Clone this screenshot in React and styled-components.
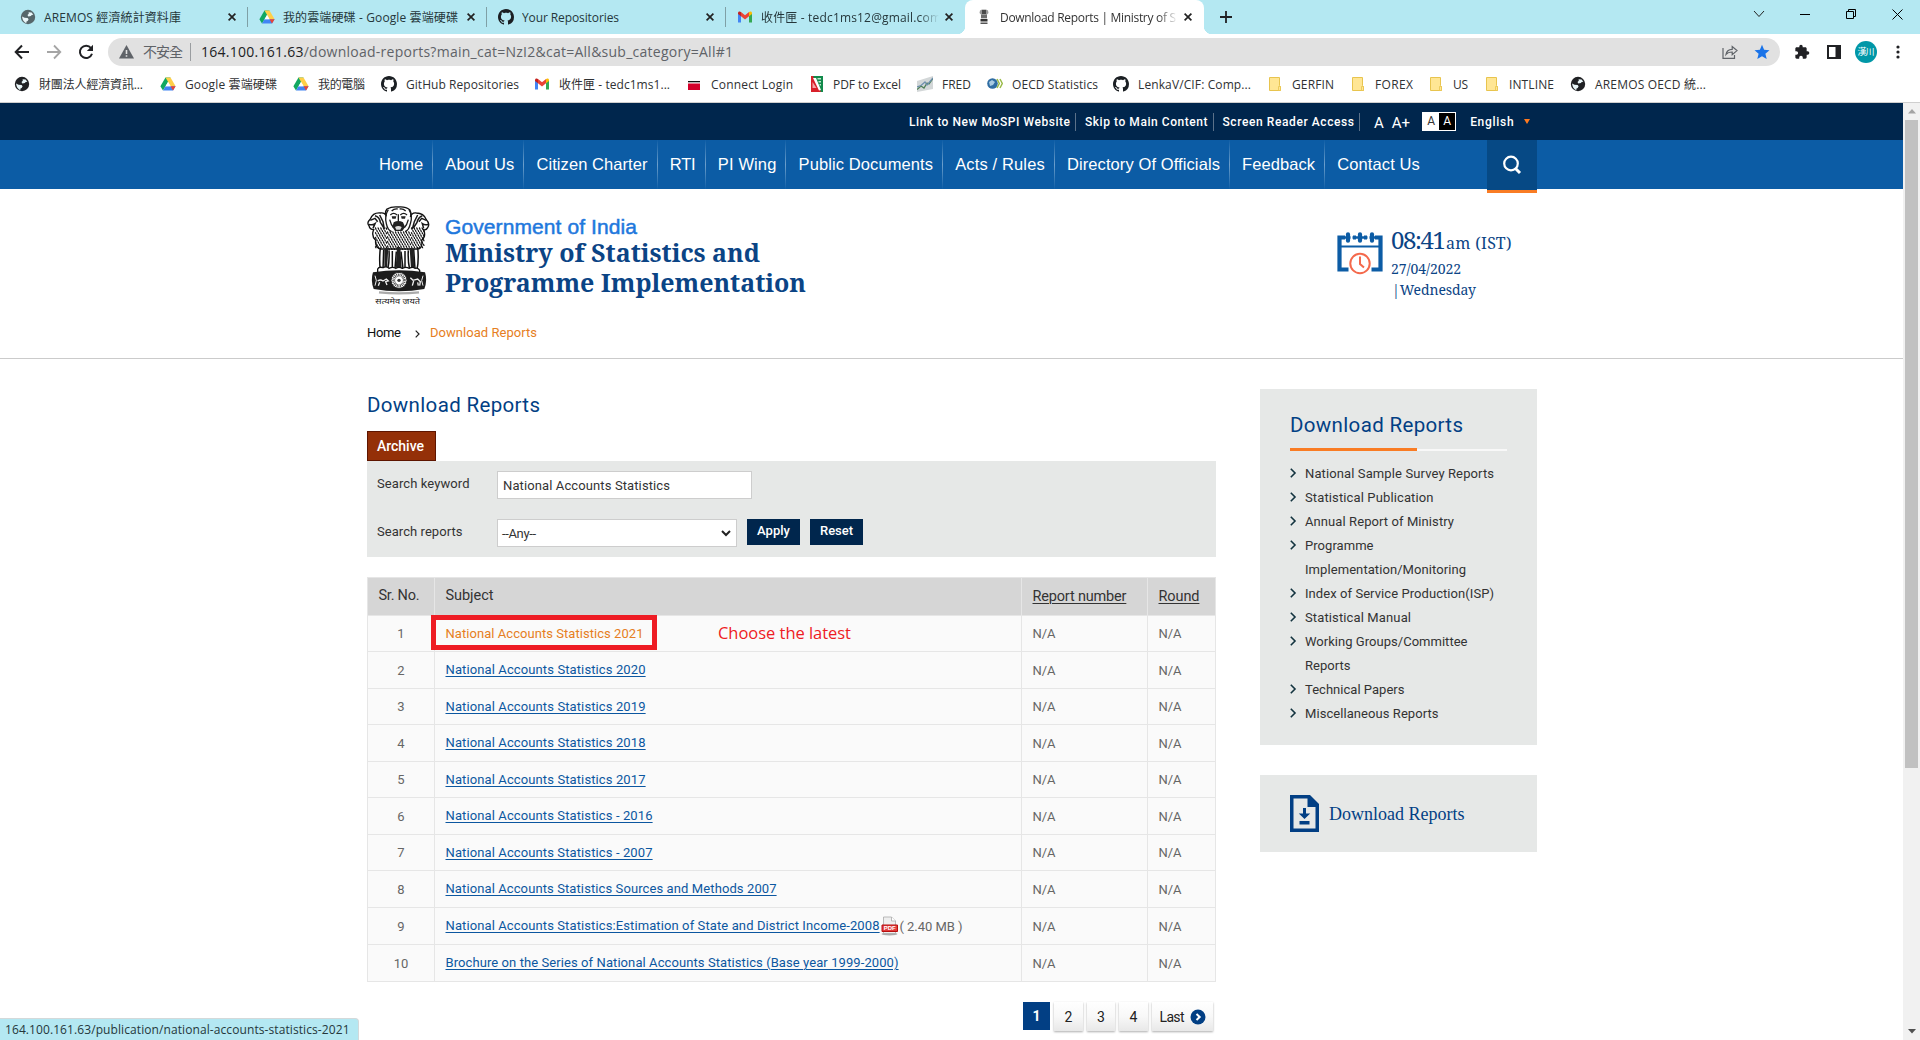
import React, { useLayoutEffect, useRef, useState } from "react";
import styled, { createGlobalStyle, css } from "styled-components";

const ui = `"Open Sans", "Noto Sans", "Noto Sans CJK TC", sans-serif`;
const roboto = `Roboto, "Liberation Sans", sans-serif`;
const arial = `"Liberation Sans", Arial, sans-serif`;
const slab = `"Noto Serif", "Droid Serif", "DejaVu Serif Condensed", "DejaVu Serif", serif`;

const Global = createGlobalStyle`
  * { box-sizing: border-box; }
  html, body { margin: 0; padding: 0; background: #fff; overflow: hidden; }
  body { font-family: ${roboto}; }
  a { color: inherit; }
`;

/* ---------- text set to a measure ---------- */

const Track = styled.span`
  display: inline-block;
  flex: none;
  white-space: pre;
`;

/* Tracks a label in or out so that it fills the measure `to`. */
function Fit({ to, children }) {
  const ref = useRef(null);
  const [ls, setLs] = useState(0);
  useLayoutEffect(() => {
    const el = ref.current;
    el.style.letterSpacing = "0px";
    el.style.marginRight = "0px";
    const natural = el.getBoundingClientRect().width;
    const n = Array.from(el.textContent).length;
    const v = n > 1 ? (to - natural) / (n - 1) : 0;
    el.style.letterSpacing = `${v}px`;
    el.style.marginRight = `${-v}px`;
    setLs(v);
  }, [to, children]);
  return (
    <Track ref={ref} style={{ letterSpacing: `${ls}px`, marginRight: `${-ls}px` }}>
      {children}
    </Track>
  );
}

/* ---------- browser chrome ---------- */

const Screen = styled.div`
  width: 1920px;
  height: 1040px;
  display: flex;
  flex-direction: column;
  position: relative;
  overflow: hidden;
  background: #fff;
`;

const TabStrip = styled.div`
  height: 34px;
  flex: none;
  display: flex;
  background: #b4e8f2;
  padding-left: 8px;
  font: 12px/35px ${ui};
  color: #25373b;
`;

const Tab = styled.div`
  width: 239px;
  height: 34px;
  flex: none;
  display: flex;
  align-items: center;
  padding: 0 7px 0 12px;
  position: relative;
  ${(p) =>
    p.$active
      ? css`
          background: #fff;
          border-radius: 8px 8px 0 0;
          margin: 0 1px;
          padding: 0 8px 0 11px;
          color: #333;
          &::before,
          &::after {
            content: "";
            position: absolute;
            bottom: 0;
            width: 8px;
            height: 8px;
          }
          &::before {
            left: -8px;
            background: radial-gradient(circle at 0 0, transparent 8px, #fff 8.5px);
          }
          &::after {
            right: -8px;
            background: radial-gradient(circle at 100% 0, transparent 8px, #fff 8.5px);
          }
        `
      : !p.$last &&
        css`
          &::after {
            content: "";
            position: absolute;
            right: -1px;
            top: 7px;
            width: 1px;
            height: 20px;
            background: #7fa0a6;
          }
        `}
`;

const TabTitle = styled.div`
  flex: 1;
  height: 34px;
  margin-left: 8px;
  overflow: hidden;
  white-space: nowrap;
  ${(p) => p.$fade && css`
    mask-image: linear-gradient(90deg, #000 158px, transparent 178px);
  `}
`;

const CloseBox = styled.div`
  width: 16px;
  height: 16px;
  display: grid;
  place-items: center;
`;

const NewTab = styled.div`
  width: 28px;
  margin-left: 7px;
  display: grid;
  place-items: center;
`;

const WindowButtons = styled.div`
  margin-left: auto;
  height: 28px;
  display: flex;
`;

const WindowButton = styled.div`
  width: 46px;
  height: 28px;
  display: grid;
  place-items: center;
`;

const Toolbar = styled.div`
  height: 36px;
  flex: none;
  display: flex;
  align-items: center;
  padding-left: 6px;
`;

const ToolButton = styled.div`
  width: 32px;
  height: 28px;
  flex: none;
  display: grid;
  place-items: center;
`;

const Omnibox = styled.div`
  width: 1672px;
  height: 28px;
  flex: none;
  margin: 0 6px 0 6px;
  border-radius: 14px;
  background: #e1e1e1;
  display: flex;
  align-items: center;
  padding: 0 10px 0 11px;
  font: 14px/28px ${ui};
  color: #5f6368;
`;

const Insecure = styled.div`
  margin-left: 9px;
  padding-right: 7px;
  display: flex;
  line-height: 18px;
  border-right: 1px solid #9a9da0;
  margin-right: 10px;
`;

const Host = styled.span`
  color: #202124;
`;

const OmniActions = styled.div`
  margin-left: auto;
  display: flex;
  gap: 16px;
  align-items: center;
`;

const Bookmarks = styled.div`
  height: 33px;
  flex: none;
  display: flex;
  align-items: center;
  padding-left: 14px;
  padding-bottom: 4px;
  border-bottom: 1px solid #cfcfcf;
  font: 12px/26px ${ui};
  color: #2f3133;
`;

const Bookmark = styled.div`
  width: ${(p) => p.$w}px;
  flex: none;
  display: flex;
  align-items: center;
  gap: 9px;
  white-space: nowrap;
  & > span { padding-top: 1px; }
`;

const Avatar = styled.div`
  width: 22px;
  height: 22px;
  border-radius: 50%;
  background: #0097a7;
  color: #fff;
  font: 9px/22px ${ui};
  text-align: center;
  white-space: nowrap;
`;

const StatusBubble = styled.div`
  position: absolute;
  left: 0;
  bottom: 0;
  width: 359px;
  height: 22px;
  border: 1px solid #d3d9da;
  border-left: 0;
  border-bottom: 0;
  border-radius: 0 4px 0 0;
  background: #b4e8f2;
  padding-left: 5px;
  font: 12px/21px ${ui};
  color: #25373b;
`;

/* ---------- viewport ---------- */

const Viewport = styled.div`
  flex: 1;
  min-height: 0;
  display: flex;
`;

const Page = styled.div`
  width: 1903px;
  flex: none;
  overflow: hidden;
`;

const Scrollbar = styled.div`
  width: 17px;
  background: #f1f1f1;
  display: flex;
  flex-direction: column;
  align-items: center;
`;

const ArrowCell = styled.div`
  height: 17px;
  display: grid;
  place-items: center;
`;

const Thumb = styled.div`
  width: 13px;
  height: 648px;
  background: #c1c1c1;
  margin-bottom: auto;
`;

const TopBar = styled.div`
  height: 37px;
  background: #00264d;
`;

const Container = styled.div`
  width: 1170px;
  margin-left: 367px;
  display: flex;
`;

const TopLinks = styled(Container)`
  height: 37px;
  padding-left: 542px;
  align-items: center;
  color: #fff;
  font: 500 12px/18px ${roboto};
`;

const TopLink = styled.div`
  height: 18px;
  border-right: 1px solid #5b7189;
  padding-right: 5px;
  margin-right: 9px;
`;

const TextSize = styled.div`
  display: flex;
  gap: 8px;
  margin: 2px 0 0 5px;
  font: 400 15px/18px ${roboto};
`;

const Contrast = styled.div`
  width: 34px;
  height: 19px;
  margin-left: 12px;
  border: 1px solid #fff;
  display: grid;
  grid-template-columns: 1fr 1fr;
  font: 12px/17px ${roboto};
  text-align: center;
  span:first-child { background: #fff; color: #333; }
  span:last-child { background: #000; color: #fff; }
`;

const Language = styled.div`
  display: flex;
  align-items: center;
  gap: 10px;
  margin-left: 14px;
`;

const Caret = styled.div`
  border: 3.5px solid transparent;
  border-top: 5px solid #ff7a1f;
  border-bottom: 0;
`;

const NavBar = styled.div`
  height: 49px;
  background: #0c5ca5;
`;

const NavItem = styled.div`
  height: 49px;
  flex: none;
  padding: 0 9.1px 0 12.1px;
  color: #fff;
  font: 16.5px/49px ${arial};
  border-right: 1px solid;
  border-image: ${(p) =>
    p.$last ? "linear-gradient(#0c5ca5, #0c5ca5) 1" : "linear-gradient(#0c5ca5, #6c9fcc 50%, #0c5ca5) 1"};
`;

const NavSearch = styled.div`
  width: 50px;
  height: 53px;
  margin-left: auto;
  background: #064985;
  border-bottom: 3px solid #f97c24;
  display: grid;
  place-items: center;
  position: relative;
`;

const Masthead = styled.header`
  height: 170px;
  border-bottom: 1px solid #cbcbcb;
  display: flex;
  flex-direction: column;
`;

const Brand = styled(Container)`
  height: 130px;
`;

const BrandText = styled.div`
  margin-left: 10px;
  padding-top: 24px;
  width: 500px;
`;

const Govt = styled.div`
  height: 24px;
  font: 21px/27px ${arial};
  -webkit-text-stroke: 0.5px #1f78dd;
  color: #1f78dd;
`;

const Ministry = styled.div`
  font: bold 25px/30px ${slab};
  color: #0b4485;
`;

const Clock = styled.div`
  margin-left: 392px;
  padding-top: 43px;
  display: flex;
  gap: 8px;
  color: #0b4485;
`;

const ClockText = styled.div`
  font: 14px/21px ${slab};
  margin-top: -6px;
`;

const ClockLine = styled.div`
  display: flex;
  align-items: baseline;
  padding-left: ${(p) => p.$indent ?? 0}px;
`;

const TimeLine = styled(ClockLine)`
  height: 32px;
`;

const Hour = styled.span`
  font-size: 24px;
  line-height: 27px;
`;

const Zone = styled.span`
  font-size: 16px;
`;

const Crumbs = styled(Container)`
  font: 13px/28px ${roboto};
  color: #111;
  align-items: center;
`;

const CrumbSep = styled.span`
  width: 29px;
  padding: 2px 0 0 3px;
  display: grid;
  place-items: center;
`;

const Orange = styled.span`
  color: #e67e22;
`;

const Body = styled(Container)`
  padding-top: 30px;
  justify-content: space-between;
  align-items: flex-start;
`;

const Main = styled.main`
  width: 849px;
`;

const Heading = styled.h1`
  margin: 0;
  font: 400 20.5px/32px ${roboto};
  color: #023f84;
`;

const Archive = styled.button`
  display: flex;
  align-items: center;
  width: 69px;
  height: 30px;
  margin-top: 10px;
  padding: 0 0 0 9px;
  border: 1px solid #5e1500;
  background: #943008;
  color: #fff;
  font: 500 14px/28px ${roboto};
`;

const Filters = styled.div`
  height: 96px;
  background: #e6e8e7;
  padding: 10px 10px 0;
  display: grid;
  grid-template-rows: 28px 28px;
  row-gap: 20px;
  font: 13px/26px ${roboto};
  color: #333;
`;

const FilterRow = styled.div`
  display: flex;
`;

const FieldLabel = styled.div`
  width: 120px;
`;

const Field = styled.div`
  width: ${(p) => p.$w}px;
  height: 28px;
  border: 1px solid #cdcdcd;
  background: #fff;
  padding: 1px 5px 0 ${(p) => p.$pad}px;
  line-height: 25px;
  display: flex;
  justify-content: space-between;
  align-items: center;
`;

const Submit = styled.button`
  width: 53px;
  height: 26px;
  margin-left: 10px;
  padding: 0;
  border: 0;
  background: #00264d;
  color: #fff;
  font: 500 13px/24px ${roboto};
  display: flex;
  justify-content: center;
`;

const Table = styled.div`
  margin-top: 20px;
  border: 1px solid #e6e6e6;
  border-bottom: 0;
`;

const Row = styled.div`
  height: ${(p) => p.$h}px;
  display: grid;
  grid-template-columns: 67px 587px 126px 67px;
  border-bottom: 1px solid #e6e6e6;
  background: ${(p) => (p.$head ? "#d6d6d6" : "#fafafa")};
  font: ${(p) => (p.$head ? 14.5 : 13)}px/1 ${roboto};
  color: ${(p) => (p.$head ? "#333" : "#666")};
`;

const Cell = styled.div`
  border-right: ${(p) => (p.$last ? 0 : 1)}px solid #e6e6e6;
  padding-left: ${(p) => (p.$center ? 0 : 10.5)}px;
  display: flex;
  align-items: center;
  justify-content: ${(p) => (p.$center ? "center" : "flex-start")};
  position: relative;
`;

const Link = styled.a`
  color: #0c57a0;
  line-height: 20px;
  & > span {
    text-decoration: underline;
    text-decoration-thickness: 1px;
    text-underline-offset: 2px;
  }
`;

const HeadLink = styled(Link)`
  color: #333;
`;

const HotLink = styled.a`
  color: #e67e22;
  line-height: 20px;
`;

const FileSize = styled.span`
  display: flex;
  align-items: center;
  gap: 2px;
  margin-left: 1px;
`;

const Marker = styled.div`
  position: absolute;
  left: -4px;
  top: -1px;
  width: 226px;
  height: 35px;
  border: 5px solid #ee1c24;
`;

const Note = styled.div`
  position: absolute;
  left: 283px;
  top: 5px;
  font: 16.5px/24px ${ui};
  color: #ee1c24;
`;

const Pager = styled.div`
  margin-top: 20px;
  display: flex;
  justify-content: flex-end;
  gap: 4.2px;
  padding-right: 2.7px;
  font: 14px/28px ${roboto};
  color: #222;
`;

const PageBox = styled.div`
  width: ${(p) => p.$w ?? 28.3}px;
  height: 29px;
  display: flex;
  align-items: center;
  justify-content: center;
  gap: 5px;
  ${(p) =>
    p.$current
      ? css`
          background: #023f84;
          color: #fff;
          font-weight: 700;
          height: 28px;
        `
      : css`
          background: linear-gradient(#fff, #f8f8f8 50%, #e8e8e8);
          box-shadow: 0 1px 2px rgba(0, 0, 0, 0.32);
        `}
`;

const Aside = styled.aside`
  width: 277px;
  display: flex;
  flex-direction: column;
  gap: 30px;
`;

const Panel = styled.section`
  height: 356px;
  background: #e6e8e7;
  padding: 20px 30px 0;
`;

const Rule = styled.div`
  width: 217px;
  height: 3px;
  margin-top: 7px;
  background: linear-gradient(90deg, #f97c24 127px, transparent 127px),
    linear-gradient(transparent 1px, #f8f8f8 1px);
`;

const Items = styled.ul`
  list-style: none;
  margin: 11px 0 0;
  padding: 0;
  font: 13px/24px ${roboto};
  color: #333;
`;

const Item = styled.li`
  display: grid;
  grid-template-columns: 15px 1fr;
  svg { margin-top: 6px; }
`;

const DownloadCard = styled.section`
  height: 77px;
  background: #e6e8e7;
  padding: 0 30px;
  display: flex;
  align-items: center;
  gap: 10px;
  font: 18px/24px "Liberation Serif", serif;
  color: #023f84;
`;

/* ---------- icons ---------- */

const Globe = ({ c = "#202124" }) => (
  <svg width="16" height="16" viewBox="0 0 16 16">
    <circle cx="8" cy="8" r="7.2" fill={c} />
    <path d="M8.6 3.2l3 .3 1.7 2.3-1.6.1-.8 1.2-2.6.3-.8-1.5 1.3-1.1zM2 7.6l2.6 1.1 3 .3 1 1.3-.9 1.6-1.2.7-.2 1.6-1.6-.9-1.5-1.7-.6-1.6z" fill="#e9f6f9" />
  </svg>
);

const Drive = () => (
  <svg width="16" height="16" viewBox="0 0 16 16">
    <path d="M5.5 1.5h5L8 6 3 14.5.4 10.2z" fill="#11a861" />
    <path d="M5.5 1.5h5l5.1 8.7h-5z" fill="#ffcf48" />
    <path d="M3 14.5l2.600-4.300h10L13 14.500z" fill="#4285f4" />
    <path d="M8 5.900l2.600 4.300h-5z" fill="#fff" />
    <path d="M13 14.500l-2.400-4.300h5z" fill="#ea4335" />
  </svg>
);

const Github = () => (
  <svg width="16" height="16" viewBox="0 0 16 16">
    <path
      fill="#1b1f23"
      d="M8 0C3.58 0 0 3.58 0 8c0 3.54 2.29 6.53 5.47 7.59.4.07.55-.17.55-.38 0-.19-.01-.82-.01-1.49-2.01.37-2.53-.49-2.69-.94-.09-.23-.48-.94-.82-1.13-.28-.15-.68-.52-.01-.53.63-.01 1.08.58 1.23.82.72 1.21 1.87.87 2.33.66.07-.52.28-.87.51-1.07-1.78-.2-3.64-.89-3.64-3.95 0-.87.31-1.59.82-2.15-.08-.2-.36-1.02.08-2.12 0 0 .67-.21 2.2.82.64-.18 1.32-.27 2-.27s1.36.09 2 .27c1.53-1.04 2.2-.82 2.2-.82.44 1.1.16 1.92.08 2.12.51.56.82 1.27.82 2.15 0 3.07-1.87 3.75-3.65 3.95.29.25.54.73.54 1.48 0 1.07-.01 1.93-.01 2.2 0 .21.15.46.55.38A8.01 8.01 0 0016 8c0-4.42-3.58-8-8-8z"
    />
  </svg>
);

const Gmail = () => (
  <svg width="16" height="16" viewBox="0 0 16 16">
    <path d="M1 13.6V4l3 2.2v7.4z" fill="#4285f4" />
    <path d="M12 13.6V6.2L15 4v9.6z" fill="#34a853" />
    <path d="M4 3l4 3.2L12 3v4.2L8 10.4 4 7.2z" fill="#ea4335" />
    <path d="M1 4.2C1 2.3 2.8 2 4 3v4.2L1 5z" fill="#c5221f" />
    <path d="M15 4.2C15 2.3 13.2 2 12 3v4.2L15 5z" fill="#fbbc04" />
  </svg>
);

const RedFlag = () => (
  <svg width="16" height="16" viewBox="0 0 16 16">
    <path d="M2 5h12v1.300H2z" fill="#111" />
    <path d="M2 7.500h12V14H2z" fill="#d4002a" />
  </svg>
);

const PdfExcel = () => (
  <svg width="16" height="16" viewBox="0 0 16 16">
    <path d="M3 0h12v16H3z" fill="#128a4b" />
    <path d="M3 0h2l8 16H3z" fill="#d8202a" />
    <path d="M5 2h3l5 12-2 .500z" fill="#fff" />
    <path d="M9.500 2h3.500v1.500H9.500zM10.500 5H13v1.500h-2.500zM11.500 8H13v1.500h-1.500z" fill="#bfe6cd" />
    <path d="M4.500 6l4 6h-4z" fill="#f3a6a6" />
  </svg>
);

const Fred = () => (
  <svg width="16" height="16" viewBox="0 0 16 16">
    <path d="M0 5l16-5v13L0 16z" fill="#d3d7d8" />
    <path d="M0 13.500l4-3.500 3 2 3-5 2 1 4-5.500" fill="none" stroke="#4d7f55" strokeWidth="1.300" />
    <path d="M0 11l4-1.500L8 6l2 3 6-7" fill="none" stroke="#6e8fae" strokeWidth="1.200" />
  </svg>
);

const Oecd = () => (
  <svg width="16" height="16" viewBox="0 0 16 16">
    <circle cx="5.500" cy="7.500" r="5.300" fill="#2f6da3" />
    <path d="M2 6l3-2 3 2-2 3-3 1z" fill="#a9cbe2" />
    <path d="M10 3l2.300 4.500L10 12M13 3l2.300 4.500L13 12" fill="none" stroke="#9bbb4a" strokeWidth="1.500" />
  </svg>
);

const Folder = () => (
  <svg width="16" height="16" viewBox="0 0 16 16">
    <path d="M2.500 1.500h10v8l1 1v4h-11z" fill="#ffe694" stroke="#e8c44e" />
    <path d="M11.500 14.500v-4h2v4z" fill="#ffe694" stroke="#e8c44e" strokeWidth=".8" />
  </svg>
);

const Close = () => (
  <svg width="8" height="8" viewBox="0 0 8 8">
    <path d="M.6.6l6.800 6.800M7.400.6L.6 7.400" stroke="#222" strokeWidth="1.700" />
  </svg>
);

const Chevron = ({ c = "#12333f", s = 1.6 }) => (
  <svg width="7" height="10" viewBox="0 0 7 10">
    <path d="M.8.8L5 5 .8 9.200" fill="none" stroke={c} strokeWidth={s} />
  </svg>
);

const Calendar = () => (
  <svg width="46" height="43" viewBox="0 0 46 43">
    <path
      d="M8 5.500H2.500v32h9M38 5.500h5.500v32h-9M16 5.500h3M27 5.500h3"
      fill="none"
      stroke="#0c5ca5"
      strokeWidth="4.200"
    />
    <path d="M3 14.500h40" stroke="#0c5ca5" strokeWidth="2.200" />
    <path d="M11 2.300v6.400M23 2.300v6.400M35 2.300v6.400" stroke="#0c5ca5" strokeWidth="4.200" strokeLinecap="round" />
    <path d="M8 5.500h30" stroke="#0c5ca5" strokeWidth="2.400" strokeDasharray="5.500 2 7 2 6 2 6" />
    <circle cx="23" cy="31.500" r="9.700" fill="#fff" stroke="#f4694c" strokeWidth="2" />
    <path d="M23 24.500V32l4 3.500" fill="none" stroke="#f4694c" strokeWidth="2" />
  </svg>
);

const DownloadDoc = () => (
  <svg width="29" height="37" viewBox="0 0 29 37">
    <path d="M0 0h20l9 9v28H0z" fill="#023f84" />
    <path d="M3.500 3.500h14V12h8v21.500h-22z" fill="#e6e8e7" />
    <path d="M13 13h3v5.500h4.200l-5.700 5.600-5.700-5.600H13zM9.500 26h10v3.500h-10z" fill="#023f84" />
  </svg>
);

const PdfIcon = () => (
  <svg width="17" height="20" viewBox="0 0 17 20">
    <ellipse cx="8.500" cy="18" rx="8" ry="1.400" fill="#aaa" />
    <path d="M2.500 1h8l4 4v12.500h-12z" fill="#eee" stroke="#aaa" strokeWidth=".8" />
    <path d="M10.500 1v4h4" fill="#fff" stroke="#aaa" strokeWidth=".8" />
    <path d="M1 9h15.500v6.500H1z" fill="#e23b3b" stroke="#b80f0f" />
    <text x="8.700" y="14.400" fontFamily="Liberation Sans" fontWeight="bold" fontSize="6" textAnchor="middle" fill="#fff">PDF</text>
  </svg>
);

const EmblemSvg = styled.svg`
  margin: 17px 0 0 -1px;
  flex: none;
`;

/* Mane locks, drawn as staggered short curls. */
const locks = (x0, x1, y0, y1) => {
  let d = "";
  let odd = 0;
  for (let y = y0; y < y1; y += 7) {
    for (let x = x0 + (odd % 2) * 4; x < x1; x += 8) d += `M${x} ${y}q3 1 3 6`;
    odd += 1;
  }
  return d;
};

const Emblem = () => (
  <EmblemSvg width="69" height="104" viewBox="21 15 207 312">
    <path d="M60 92q-8 60 2 118h112q12-60 4-118z" fill="#fff" />
    <path
      d="M84 24q14-8 34-6 22-2 34 8 6 12 2 22 4-14 18-12 22 0 30 20 12 12 4 24-4 8-12 6 8 20-6 32 4 26-14 26H66q-18-2-16-26-14-14-6-32-12 0-14-12-8-8 4-20 8-20 30-18 14-2 18 10-6-12 2-22z"
      fill="#fff"
      stroke="#111"
      strokeWidth="4"
    />
    <path d={locks(48, 84, 80, 142)} stroke="#111" strokeWidth="3.800" fill="none" />
    <path d={locks(84, 156, 92, 146)} stroke="#111" strokeWidth="3.800" fill="none" />
    <path d={locks(156, 194, 80, 142)} stroke="#111" strokeWidth="3.800" fill="none" />
    <path
      d="M88 26q-12 18-6 42 4 20 16 24M150 26q12 18 4 42-4 20-16 24M94 42q10-10 20 0M124 42q10-10 20 0M118 40v22M98 30q8-8 18-6M140 30q-8-8-18-6M92 56q4 16 12 24M148 56q-4 16-12 24"
      stroke="#1a1a1a"
      strokeWidth="4"
      fill="none"
    />
    <path d="M98 46h14l-2 7h-10zM126 46h14l-2 7h-10z" fill="#222" />
    <path d="M104 64q14-8 28 0l6 14-8 12H108l-8-12z" fill="#222" />
    <path d="M108 78q10-6 20 0l-4 8h-12z" fill="#ddd" />
    <path
      d="M30 70q10 4 18-2l-6 14M34 58l14-6 8 10M48 44q14 4 16 20l10 16M62 42l10 20 4 22M208 70q-10 4-18-2l4 14M202 58l-14-6-8 10M190 44q-12 4-16 20l-10 16M176 42l-10 20-6 22"
      stroke="#1a1a1a"
      strokeWidth="4.500"
      fill="none"
    />
    <path
      d="M64 140q-4 40 0 66M74 146l-2 60M90 148q2 30-4 58M100 150v54M112 152l-4 50M126 152l6 50M138 150v54M148 148q-2 30 4 58M164 144l4 60M176 138q4 40-2 68"
      stroke="#111"
      strokeWidth="4.500"
      fill="none"
    />
    <path d="M76 142h12l-4 62h-8zM114 138h10l4 62h-18zM152 142h12l2 62h-10z" fill="#222" />
    <path d="M56 204q4-8 16-4 10-6 18 2 12-6 20 0 10-6 20 0 12-6 20 0 12-6 18 0 10-2 14 6v8H56z" fill="#fff" stroke="#111" strokeWidth="4" />
    <path d="M42 214q78-12 156 0 8 24-2 50-76 14-152 0-10-26-2-50z" fill="#1c1c1c" />
    <path d="M48 224q8 14 0 30M192 224q-8 14 0 30" stroke="#eee" strokeWidth="3" fill="none" />
    <circle cx="120" cy="238" r="24" fill="#fff" stroke="#222" strokeWidth="3" />
    <circle cx="120" cy="238" r="16" fill="none" stroke="#444" strokeWidth="9" strokeDasharray="2.500 2.200" />
    <circle cx="120" cy="238" r="5" fill="#333" />
    <path d="M56 240q8-6 16 0l10-6 6 6-8 2 4 10M62 244l-4 10M154 230l8 8 14-4 8 8-2 12M164 240l-4 14M176 244l2 10" stroke="#eee" strokeWidth="4" fill="none" />
    <path d="M60 274q60 6 120 0" stroke="#aaa" strokeWidth="7" fill="none" />
    <text
      x="116"
      y="308"
      textAnchor="middle"
      textLength="134"
      lengthAdjust="spacingAndGlyphs"
      fontSize="25"
      fontFamily="Noto Sans Devanagari, Lohit Devanagari, Noto Sans, sans-serif"
      fill="#222"
    >
      सत्यमेव जयते
    </text>
  </EmblemSvg>
);

/* ---------- data ---------- */

const tabs = [
  { icon: <Globe c="#56666a" />, text: "AREMOS 經濟統計資料庫", w: 137 },
  { icon: <Drive />, text: "我的雲端硬碟 - Google 雲端硬碟", w: 175 },
  { icon: <Github />, text: "Your Repositories", w: 97 },
  { icon: <Gmail />, text: "收件匣 - tedc1ms12@gmail.com", w: 180, fade: true, last: true },
];

const bookmarks = [
  { icon: <Globe />, text: "財團法人經濟資訊...", w: 104, box: 146 },
  { icon: <Drive />, text: "Google 雲端硬碟", w: 92, box: 133 },
  { icon: <Drive />, text: "我的電腦", w: 47, box: 88 },
  { icon: <Github />, text: "GitHub Repositories", w: 113, box: 153 },
  { icon: <Gmail />, text: "收件匣 - tedc1ms1...", w: 111, box: 152 },
  { icon: <RedFlag />, text: "Connect Login", w: 82, box: 122 },
  { icon: <PdfExcel />, text: "PDF to Excel", w: 68, box: 109 },
  { icon: <Fred />, text: "FRED", w: 29, box: 70 },
  { icon: <Oecd />, text: "OECD Statistics", w: 86, box: 126 },
  { icon: <Github />, text: "LenkaV/CIF: Comp...", w: 113, box: 154 },
  { icon: <Folder />, text: "GERFIN", w: 42, box: 83 },
  { icon: <Folder />, text: "FOREX", w: 38, box: 78 },
  { icon: <Folder />, text: "US", w: 15, box: 56 },
  { icon: <Folder />, text: "INTLINE", w: 45, box: 86 },
  { icon: <Globe />, text: "AREMOS OECD 統...", w: 111, box: 150 },
];

const nav = [
  ["Home", 44],
  ["About Us", 69],
  ["Citizen Charter", 111],
  ["RTI", 26],
  ["PI Wing", 58.5],
  ["Public Documents", 134.5],
  ["Acts / Rules", 89.5],
  ["Directory Of Officials", 153],
  ["Feedback", 73],
  ["Contact Us", 82.5],
];

const rows = [
  { h: 36, text: "National Accounts Statistics 2021", w: 198 },
  { h: 37, text: "National Accounts Statistics 2020", w: 200 },
  { h: 36, text: "National Accounts Statistics 2019", w: 200 },
  { h: 37, text: "National Accounts Statistics 2018", w: 200 },
  { h: 36, text: "National Accounts Statistics 2017", w: 200 },
  { h: 37, text: "National Accounts Statistics - 2016", w: 207 },
  { h: 36, text: "National Accounts Statistics - 2007", w: 207 },
  { h: 37, text: "National Accounts Statistics Sources and Methods 2007", w: 331 },
  { h: 37, text: "National Accounts Statistics:Estimation of State and District Income-2008", w: 434, size: "( 2.40 MB )" },
  { h: 37, text: "Brochure on the Series of National Accounts Statistics (Base year 1999-2000)", w: 453 },
];

const links = [
  [["National Sample Survey Reports", 189]],
  [["Statistical Publication", 128.5]],
  [["Annual Report of Ministry", 149]],
  [["Programme", 68.5], ["Implementation/Monitoring", 161]],
  [["Index of Service Production(ISP)", 189]],
  [["Statistical Manual", 106]],
  [["Working Groups/Committee", 162.5], ["Reports", 45.5]],
  [["Technical Papers", 99.5]],
  [["Miscellaneous Reports", 133.5]],
];

/* ---------- sections ---------- */

const BrowserChrome = () => (
  <>
    <TabStrip>
      {tabs.map((t) => (
        <Tab key={t.text} $last={t.last}>
          {t.icon}
          <TabTitle $fade={t.fade}>
            <Fit to={t.w}>{t.text}</Fit>
          </TabTitle>
          <CloseBox><Close /></CloseBox>
        </Tab>
      ))}
      <Tab $active>
        <svg width="16" height="16" viewBox="0 0 16 16">
          <path d="M4 1.500L6 .500h4l2 1 .500 2.500L11 5.500V9H5V5.500L3.500 4z" fill="#9a9a9a" />
          <path d="M6 1h4v4H6z" fill="#4a4a4a" />
          <path d="M5.500 6h1v3.500h-1zM7.500 6h1v3.500h-1zM9.500 6h1v3.500h-1z" fill="#444" />
          <path d="M4.500 10h7v2.500h-7z" fill="#333" />
          <path d="M4.500 13.500h7V15h-7z" fill="#555" />
        </svg>
        <TabTitle $fade>
          <Fit to={176}>Download Reports | Ministry of S</Fit>
        </TabTitle>
        <CloseBox><Close /></CloseBox>
      </Tab>
      <NewTab>
        <svg width="12" height="12" viewBox="0 0 12 12">
          <path d="M6 0v12M0 6h12" stroke="#202124" strokeWidth="1.800" />
        </svg>
      </NewTab>
      <WindowButtons>
        <WindowButton>
          <svg width="12" height="8" viewBox="0 0 12 8"><path d="M1 1l5 5.500L11 1" fill="none" stroke="#222" /></svg>
        </WindowButton>
        <WindowButton>
          <svg width="10" height="10" viewBox="0 0 10 10"><path d="M0 5.500h10" stroke="#000" /></svg>
        </WindowButton>
        <WindowButton>
          <svg width="10" height="10" viewBox="0 0 10 10">
            <path d="M.5 2.500h7v7h-7zM2.500 2.500v-2h7v7h-2" fill="none" stroke="#000" />
          </svg>
        </WindowButton>
        <WindowButton>
          <svg width="11" height="11" viewBox="0 0 11 11"><path d="M.5.5l10 10M10.500.5l-10 10" stroke="#000" /></svg>
        </WindowButton>
      </WindowButtons>
    </TabStrip>

    <Toolbar>
      <ToolButton>
        <svg width="16" height="16" viewBox="0 0 16 16">
          <path d="M15 8H2M8 1.500L1.700 8 8 14.500" fill="none" stroke="#202124" strokeWidth="2" />
        </svg>
      </ToolButton>
      <ToolButton>
        <svg width="16" height="16" viewBox="0 0 16 16">
          <path d="M1 8h13M8 1.500L14.300 8 8 14.500" fill="none" stroke="#a5a5a5" strokeWidth="1.800" />
        </svg>
      </ToolButton>
      <ToolButton>
        <svg width="16" height="16" viewBox="0 0 16 16">
          <path d="M13 4A6.200 6.200 0 1 0 14 9.800" fill="none" stroke="#202124" strokeWidth="2" />
          <path d="M15 .8V7H8.800z" fill="#202124" />
        </svg>
      </ToolButton>
      <Omnibox>
        <svg width="15" height="14" viewBox="0 0 15 14">
          <path d="M7.500 0L15 13.500H0z" fill="#5f6368" />
          <path d="M6.700 5h1.600v4H6.700zM6.700 10.200h1.600v1.600H6.700z" fill="#e1e1e1" />
        </svg>
        <Insecure><Fit to={40}>不安全</Fit></Insecure>
        <Fit to={532}>
          <Host>164.100.161.63</Host>/download-reports?main_cat=NzI2&amp;cat=All&amp;sub_category=All#1
        </Fit>
        <OmniActions>
          <svg width="16" height="14" viewBox="0 0 16 14">
            <path d="M1 3v10.300h11.500V10M4 9.500q.7-5 6.200-5.200V1.500L15 5.600l-4.800 4V7Q6 7 4 9.500z" fill="none" stroke="#5f6368" strokeWidth="1.200" />
          </svg>
          <svg width="16" height="16" viewBox="0 0 16 16">
            <path d="M8 .8l2.100 5 5.400.4-4.100 3.500 1.300 5.300L8 12.200 3.300 15l1.300-5.300L.5 6.200l5.400-.4z" fill="#1a73e8" />
          </svg>
        </OmniActions>
      </Omnibox>
      <ToolButton>
        <svg width="16" height="16" viewBox="0 0 24 24">
          <path fill="#202124" d="M20.500 11H19V7c0-1.100-.9-2-2-2h-4V3.500a2.500 2.500 0 0 0-5 0V5H4c-1.100 0-2 .9-2 2v3.800h1.500a2.700 2.700 0 0 1 0 5.400H2V20c0 1.100.9 2 2 2h3.800v-1.500a2.700 2.700 0 0 1 5.400 0V22H17c1.100 0 2-.9 2-2v-4h1.500a2.500 2.500 0 0 0 0-5z" />
        </svg>
      </ToolButton>
      <ToolButton>
        <svg width="14" height="14" viewBox="0 0 14 14">
          <path d="M0 0h14v14H0z" fill="#202124" />
          <path d="M2 2h6.500v10H2z" fill="#fff" />
        </svg>
      </ToolButton>
      <ToolButton><Avatar><Fit to={17}>漢川</Fit></Avatar></ToolButton>
      <ToolButton>
        <svg width="4" height="14" viewBox="0 0 4 14">
          <circle cx="2" cy="2" r="1.600" fill="#202124" />
          <circle cx="2" cy="7" r="1.600" fill="#202124" />
          <circle cx="2" cy="12" r="1.600" fill="#202124" />
        </svg>
      </ToolButton>
    </Toolbar>

    <Bookmarks>
      {bookmarks.map((b) => (
        <Bookmark key={b.text} $w={b.box}>
          {b.icon}
          <Fit to={b.w}>{b.text}</Fit>
        </Bookmark>
      ))}
    </Bookmarks>
  </>
);

const SiteHeader = () => (
  <>
    <TopBar>
      <TopLinks>
        <TopLink><Fit to={161}>Link to New MoSPI Website</Fit></TopLink>
        <TopLink><Fit to={122.5}>Skip to Main Content</Fit></TopLink>
        <TopLink><Fit to={131.5}>Screen Reader Access</Fit></TopLink>
        <TextSize><span>A</span><span>A+</span></TextSize>
        <Contrast><span>A</span><span>A</span></Contrast>
        <Language><Fit to={43.5}>English</Fit><Caret /></Language>
      </TopLinks>
    </TopBar>
    <NavBar>
      <Container>
        {nav.map(([t, w], i) => (
          <NavItem key={t} $last={i === nav.length - 1}><Fit to={w}>{t}</Fit></NavItem>
        ))}
        <NavSearch>
          <svg width="20" height="20" viewBox="0 0 20 20">
            <circle cx="9" cy="8.500" r="6.800" fill="none" stroke="#fff" strokeWidth="2.200" />
            <path d="M13.500 13.500l4.500 4.500" stroke="#fff" strokeWidth="3" />
          </svg>
        </NavSearch>
      </Container>
    </NavBar>
    <Masthead>
      <Brand>
        <Emblem />
        <BrandText>
          <Govt><Fit to={192}>Government of India</Fit></Govt>
          <Ministry><Fit to={315}>Ministry of Statistics and</Fit></Ministry>
          <Ministry><Fit to={361}>Programme Implementation</Fit></Ministry>
        </BrandText>
        <Clock>
          <Calendar />
          <ClockText>
            <TimeLine>
              <Hour><Fit to={55}>08:41</Fit></Hour>
              <Zone><Fit to={65.5}>am (IST)</Fit></Zone>
            </TimeLine>
            <ClockLine><Fit to={70}>27/04/2022</Fit></ClockLine>
            <ClockLine $indent={1}><Fit to={84}>|Wednesday</Fit></ClockLine>
          </ClockText>
        </Clock>
      </Brand>
      <Crumbs>
        <Fit to={34}>Home</Fit>
        <CrumbSep>
          <svg width="5" height="8" viewBox="0 0 5 8"><path d="M.7.7L4 4 .7 7.300" fill="none" stroke="#222" strokeWidth="1.200" /></svg>
        </CrumbSep>
        <Orange><Fit to={107}>Download Reports</Fit></Orange>
      </Crumbs>
    </Masthead>
  </>
);

const Reports = () => (
  <Main>
    <Heading><Fit to={173}>Download Reports</Fit></Heading>
    <Archive><Fit to={47}>Archive</Fit></Archive>
    <Filters>
      <FilterRow>
        <FieldLabel><Fit to={92.5}>Search keyword</Fit></FieldLabel>
        <Field $w={255} $pad={5}><Fit to={167}>National Accounts Statistics</Fit></Field>
      </FilterRow>
      <FilterRow>
        <FieldLabel><Fit to={85.5}>Search reports</Fit></FieldLabel>
        <Field $w={240} $pad={4}>
          <Fit to={34}>--Any--</Fit>
          <svg width="10" height="7" viewBox="0 0 10 7"><path d="M1 1l4 4 4-4" fill="none" stroke="#222" strokeWidth="2" /></svg>
        </Field>
        <Submit><Fit to={33}>Apply</Fit></Submit>
        <Submit><Fit to={33}>Reset</Fit></Submit>
      </FilterRow>
    </Filters>
    <Table>
      <Row $head $h={38}>
        <Cell><Fit to={41}>Sr. No.</Fit></Cell>
        <Cell><Fit to={48}>Subject</Fit></Cell>
        <Cell><HeadLink><Fit to={94}>Report number</Fit></HeadLink></Cell>
        <Cell $last><HeadLink><Fit to={41}>Round</Fit></HeadLink></Cell>
      </Row>
      {rows.map((r, i) => {
        const A = i === 0 ? HotLink : Link;
        return (
          <Row key={r.text} $h={r.h}>
            <Cell $center>{i + 1}</Cell>
            <Cell>
              <A><Fit to={r.w}>{r.text}</Fit></A>
              {r.size && (
                <FileSize>
                  <PdfIcon />
                  <Fit to={63}>{r.size}</Fit>
                </FileSize>
              )}
              {i === 0 && (
                <>
                  <Marker />
                  <Note><Fit to={133}>Choose the latest</Fit></Note>
                </>
              )}
            </Cell>
            <Cell><Fit to={23}>N/A</Fit></Cell>
            <Cell $last><Fit to={23}>N/A</Fit></Cell>
          </Row>
        );
      })}
    </Table>
    <Pager>
      <PageBox $current $w={27}>1</PageBox>
      <PageBox>2</PageBox>
      <PageBox>3</PageBox>
      <PageBox>4</PageBox>
      <PageBox $w={61.6}>
        <Fit to={25}>Last</Fit>
        <svg width="16" height="16" viewBox="0 0 16 16">
          <circle cx="8" cy="8" r="7.500" fill="#023f84" />
          <path d="M6.500 5l3.200 3-3.200 3" fill="none" stroke="#fff" strokeWidth="2" />
        </svg>
      </PageBox>
    </Pager>
  </Main>
);

const Sidebar = () => (
  <Aside>
    <Panel>
      <Heading as="h2"><Fit to={173}>Download Reports</Fit></Heading>
      <Rule />
      <Items>
        {links.map((lines) => (
          <Item key={lines[0][0]}>
            <Chevron />
            <div>
              {lines.map(([t, w]) => (
                <div key={t}><Fit to={w}>{t}</Fit></div>
              ))}
            </div>
          </Item>
        ))}
      </Items>
    </Panel>
    <DownloadCard>
      <DownloadDoc />
      <Fit to={135.5}>Download Reports</Fit>
    </DownloadCard>
  </Aside>
);

export default function App() {
  return (
    <Screen>
      <Global />
      <BrowserChrome />
      <Viewport>
        <Page>
          <SiteHeader />
          <Body>
            <Reports />
            <Sidebar />
          </Body>
        </Page>
        <Scrollbar>
          <ArrowCell>
            <svg width="8" height="5" viewBox="0 0 8 5"><path d="M4 0l4 4.500H0z" fill="#a3a3a3" /></svg>
          </ArrowCell>
          <Thumb />
          <ArrowCell>
            <svg width="8" height="5" viewBox="0 0 8 5"><path d="M4 4.500L0 0h8z" fill="#505050" /></svg>
          </ArrowCell>
        </Scrollbar>
      </Viewport>
      <StatusBubble><Fit to={344.5}>164.100.161.63/publication/national-accounts-statistics-2021</Fit></StatusBubble>
    </Screen>
  );
}
